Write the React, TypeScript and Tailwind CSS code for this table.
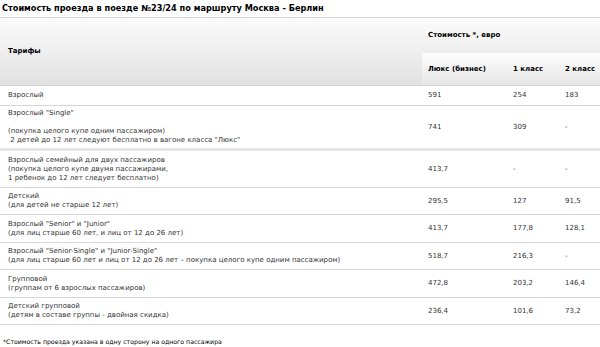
const rows = [
  { h: "h-[20px]", lines: ["Взрослый"], v: ["591", "254", "183"] },
  {
    h: "h-[45px]",
    lines: [
      'Взрослый "Single"',
      "\u00a0",
      "(покупка целого купе одним пассажиром)",
      '\u00a02 детей до 12 лет следуют бесплатно в вагоне класса "Люкс"',
    ],
    v: ["741", "309", "-"],
    thick: true,
  },
  {
    h: "h-[37px]",
    lines: [
      "Взрослый семейный для двух пассажиров",
      "(покупка целого купе двумя пассажирами,",
      "1 ребенок до 12 лет следует бесплатно)",
    ],
    v: ["413,7", "-", "-"],
  },
  { h: "h-[27px]", lines: ["Детский", "(для детей не старше 12 лет)"], v: ["295,5", "127", "91,5"] },
  {
    h: "h-[28px]",
    lines: ['Взрослый "Senior" и "Junior"', "(для лиц старше 60 лет, и лиц от 12 до 26 лет)"],
    v: ["413,7", "177,8", "128,1"],
  },
  {
    h: "h-[27px]",
    lines: [
      'Взрослый "Senior-Single" и "Junior-Single"',
      "(для лиц старше 60 лет и лиц от 12 до 26 лет – покупка целого купе одним пассажиром)",
    ],
    v: ["518,7", "216,3", "-"],
  },
  { h: "h-[28px]", lines: ["Групповой", "(группам от 6 взрослых пассажиров)"], v: ["472,8", "203,2", "146,4"] },
  {
    h: "h-[27px]",
    lines: ["Детский групповой", "(детям в составе группы - двойная скидка)"],
    v: ["236,4", "101,6", "73,2"],
  },
];

export default function App() {
  return (
    <div className="h-[347px] w-[600px] overflow-hidden bg-white font-['DejaVu_Sans',Verdana,sans-serif] text-[7px] leading-[9px] text-[#333]">
      <div className="flex h-[17px] items-center pl-[2px] text-[8.2px] font-bold text-black">
        Стоимость проезда в поезде №23/24 по маршруту Москва - Берлин
      </div>

      {/* header */}
      <div className="flex h-[69px] border-t border-b border-[#d4d4d4] bg-gradient-to-b from-[#fbfbfb] to-[#e1e1e1] font-bold text-black">
        <div className="flex w-[422px] items-center pl-[8px]">Тарифы</div>
        <div className="flex flex-1 flex-col">
          <div className="flex h-[35px] items-center pl-[6px]">Стоимость *, евро</div>
          <div className="flex flex-1 bg-gradient-to-b from-[#fdfdfd] to-[#e6e6e6]">
            <div className="flex w-[85px] items-center pl-[6px]">Люкс (бизнес)</div>
            <div className="flex w-[52px] items-center pl-[6px]">1 класс</div>
            <div className="flex flex-1 items-center pl-[6px]">2 класс</div>
          </div>
        </div>
      </div>

      {rows.map((r, i) => (
        <div
          key={i}
          className={`flex ${r.h} ${r.thick ? "border-b-[3px] border-[#e6e6e6]" : "border-b border-[#d6d6d6]"}`}
        >
          <div className="flex w-[422px] flex-col justify-center whitespace-pre pl-[8px]">
            {r.lines.map((l, j) => (
              <div key={j}>{l}</div>
            ))}
          </div>
          <div className="flex w-[85px] items-center pl-[6px]">{r.v[0]}</div>
          <div className="flex w-[52px] items-center pl-[6px]">{r.v[1]}</div>
          <div className="flex flex-1 items-center pl-[6px]">{r.v[2]}</div>
        </div>
      ))}

      <div className="pl-[3px] pt-[12px] text-[6.2px] text-black">
        *Стоимость проезда указана в одну сторону на одного пассажира
      </div>
    </div>
  );
}
